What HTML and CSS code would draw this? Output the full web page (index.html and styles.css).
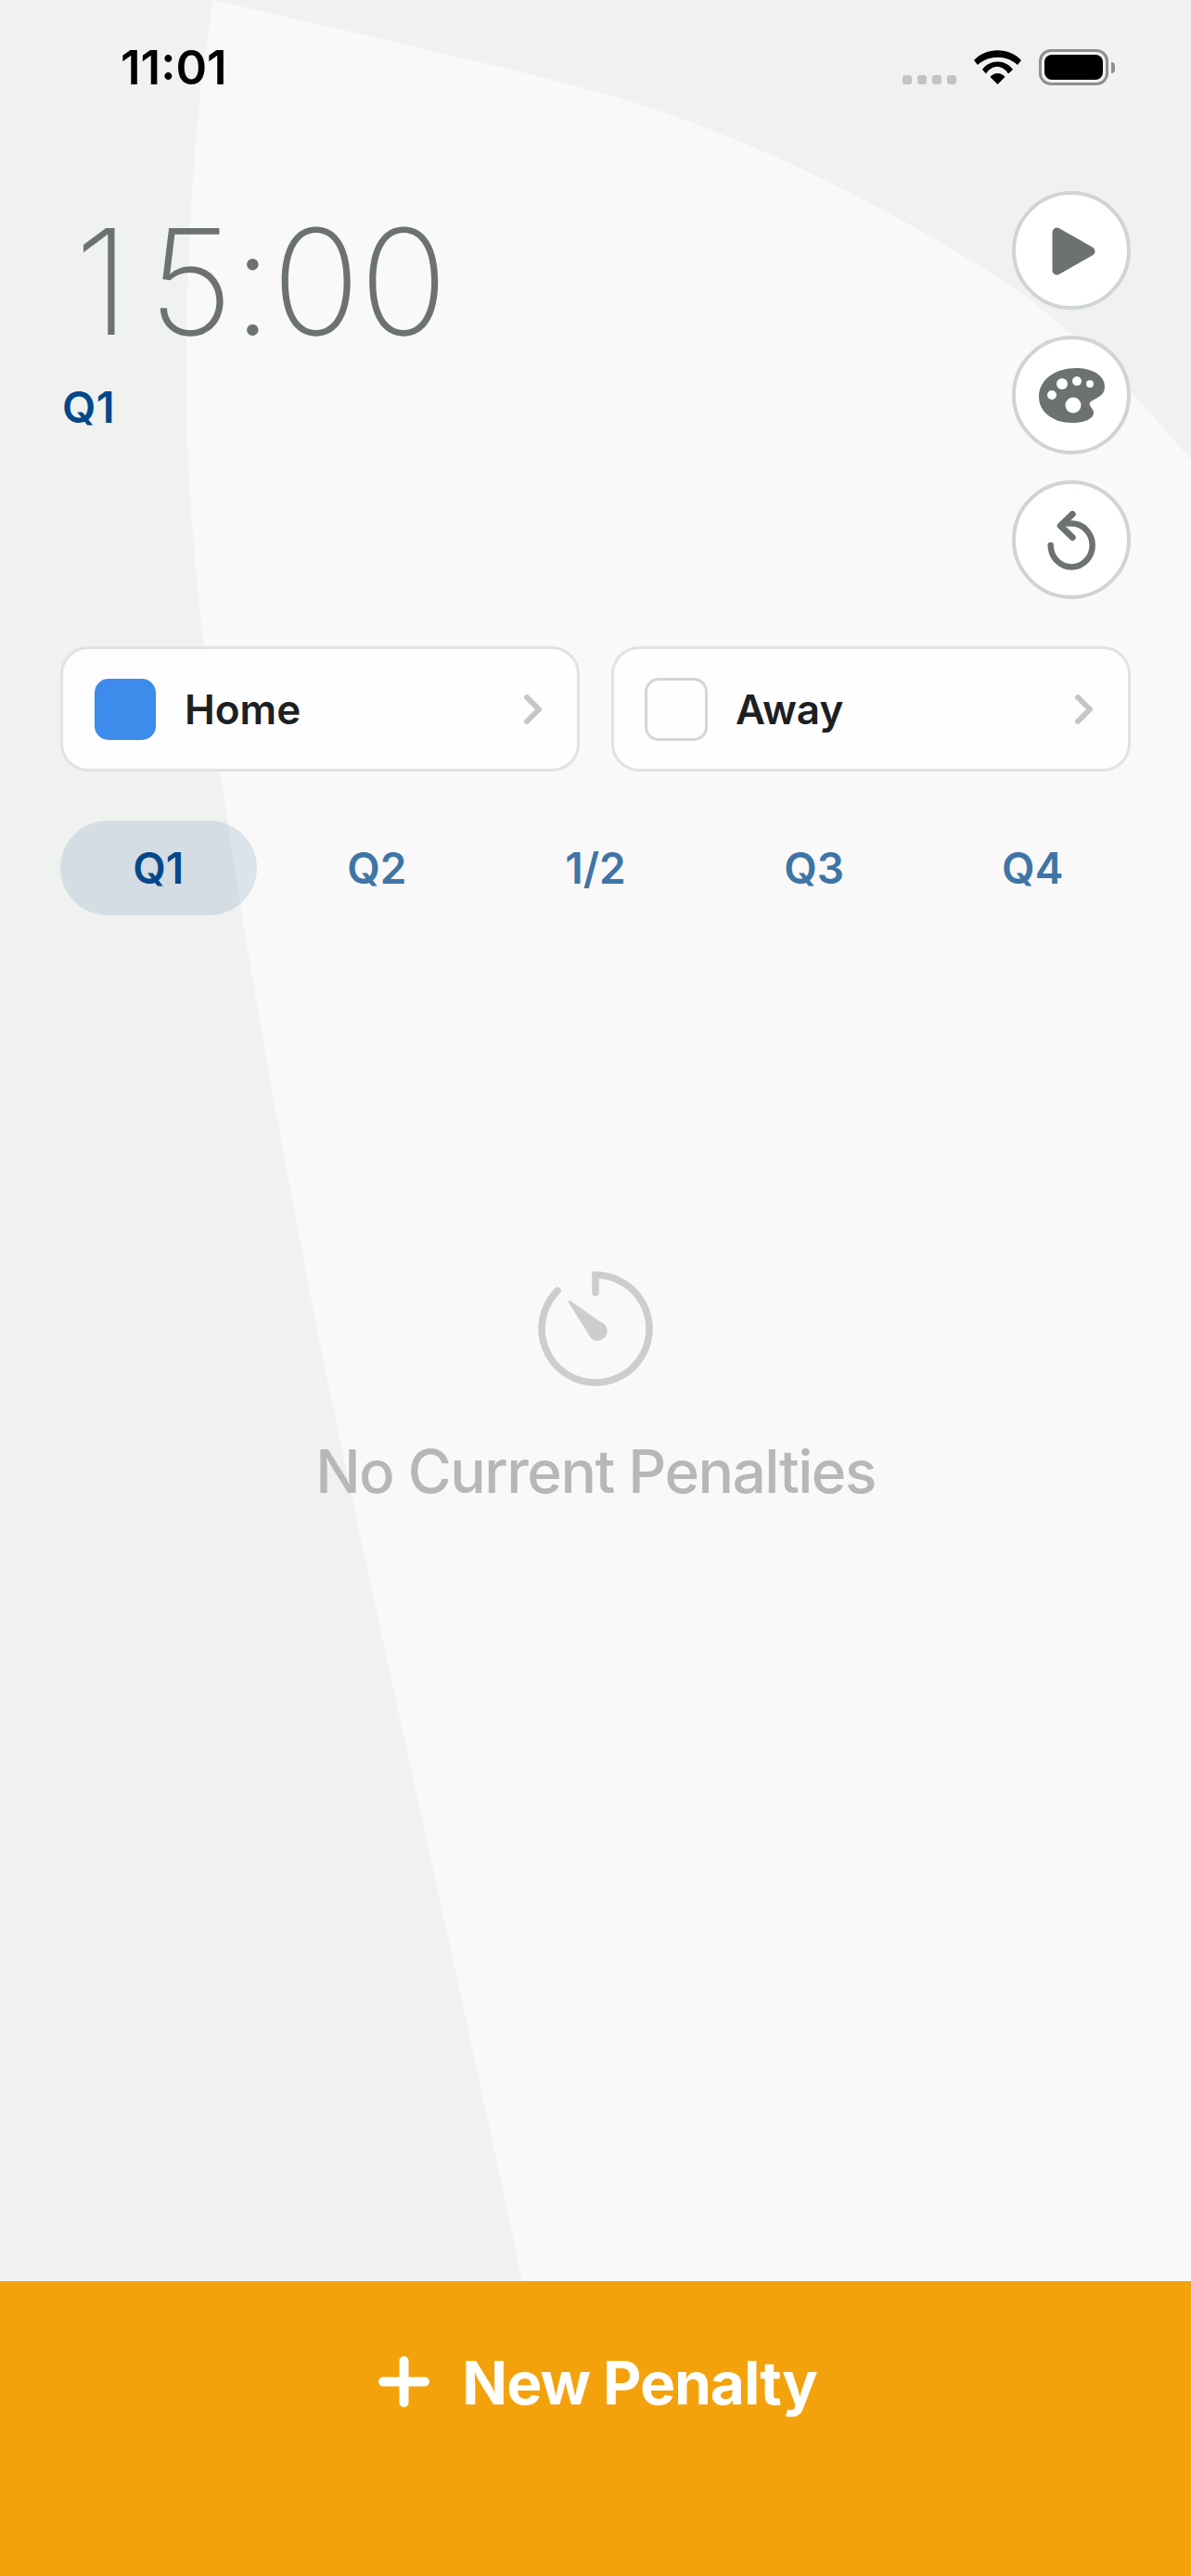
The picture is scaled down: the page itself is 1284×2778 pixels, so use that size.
FILE: index.html
```html
<!DOCTYPE html>
<html lang="en">
	<head>
		<meta charset="UTF-8" />
		<meta name="viewport" content="width=device-width, initial-scale=1.0" />
		<title>Penalty Timer</title>
		<link rel="stylesheet" href="styles.css">
	</head>
	<body>
		<div class="screen">
			<svg class="bg-shape" width="1284" height="2460" viewBox="0 0 1284 2460">
				<path d="M230 0C207 130 196 340 203 500C212 700 262 1020 324 1340C370 1590 470 2020 563 2460H1284V496C1220 420 1150 347 1077 300C960 225 800 141 640 98C505 62 370 33 230 0Z" fill="#f9f9f9" />
			</svg>
			<div class="status-bar">
				<span class="clock">11:01</span>
				<div class="status-icons">
					<div class="signal">
						<i></i><i></i><i></i><i></i>
					</div>
					<svg class="wifi" width="51" height="37" viewBox="0 0 51 37">
						<path d="M0 11C13-3.500 38-3.500 51 11L47 16C35 5 16 5 4 16Z" />
						<path d="M9 21C17 9.500 34 9.500 42 21L37 25.500C31 15.500 19 15.500 13 25.500Z" />
						<path d="M17.500 29C22 23.800 29 23.800 33.500 29L25.500 37Z" />
					</svg>
					<div class="battery">
						<div class="battery-level"></div>
					</div>
					<div class="battery-cap"></div>
				</div>
			</div>
			<div class="top-row">
				<div class="time-box">
					<div class="timer">15:00</div>
					<div class="quarter-label">Q1</div>
				</div>
				<div class="tool-list">
					<button class="tool-btn" type="button">
						<svg width="60" height="60" viewBox="0 0 60 60">
							<path d="M14.500 10.500L50.500 31L14.500 51.500Z" fill="#6c7172" stroke="#6c7172" stroke-width="10" stroke-linejoin="round" />
						</svg>
					</button>
					<button class="tool-btn" type="button">
						<svg width="71" height="59" viewBox="0 0 71 59">
							<path d="M0 31C0 12 18 0 40 0C58 0 71 8 71 20C71 30 62 32 56 36C52 39 58 43 59 47C60 54 50 59 36 59C15 59 0 47 0 31Z" fill="#6c7172" />
							<circle cx="14" cy="29" r="5" fill="#fff" />
							<circle cx="25" cy="17" r="6" fill="#fff" />
							<circle cx="41" cy="14" r="5" fill="#fff" />
							<circle cx="55" cy="17" r="4" fill="#fff" />
							<circle cx="37" cy="40" r="8.500" fill="#fff" />
						</svg>
					</button>
					<button class="tool-btn" type="button">
						<svg width="60" height="70" viewBox="-1.200 -3.500 60 70" fill="none" stroke="#6c7172" stroke-linecap="round" stroke-linejoin="round">
							<path d="M6.500 37.500A22.500 23.500 0 1 0 29 14H24" stroke-width="6.500" />
							<path d="M30 4L17 16.500L30 29" stroke-width="7" />
						</svg>
					</button>
				</div>
			</div>
			<div class="team-row">
				<div class="team-card">
					<div class="swatch swatch-home"></div>
					<span class="team-name">Home</span>
					<svg class="chevron" width="19" height="32" viewBox="0 0 19 32">
						<path d="M3 3L16 16L3 29" />
					</svg>
				</div>
				<div class="team-card">
					<div class="swatch swatch-away"></div>
					<span class="team-name">Away</span>
					<svg class="chevron" width="19" height="32" viewBox="0 0 19 32">
						<path d="M3 3L16 16L3 29" />
					</svg>
				</div>
			</div>
			<div class="period-row">
				<div class="period active">Q1</div>
				<div class="period">Q2</div>
				<div class="period">1/2</div>
				<div class="period">Q3</div>
				<div class="period">Q4</div>
			</div>
			<div class="empty-state">
				<svg width="124" height="124" viewBox="0 0 124 124">
					<path d="M62 23V4A58 58 0 1 1 21 21" fill="none" stroke="#cbcecd" stroke-width="7.500" stroke-linecap="round" />
					<path d="M32.500 33Q33.500 30.500 36 32.500L66.500 54A10.500 10.500 0 1 1 54 67Z" fill="#cbcecd" />
				</svg>
				<p class="empty-text">No Current Penalties</p>
			</div>
			<div class="footer-btn">
				<svg width="55" height="55" viewBox="0 0 55 55">
					<path d="M5 27.500H50M27.500 5V50" stroke="#fff" stroke-width="10" stroke-linecap="round" />
				</svg>
				<span class="footer-label">New Penalty</span>
			</div>
		</div>
	</body>
</html>
```

FILE: styles.css
```css
* {
	box-sizing: border-box;
}
body {
	margin: 0;
	font-family: "Inter", "Liberation Sans", sans-serif;
}
.screen {
	position: relative;
	width: 1284px;
	height: 2778px;
	background: #f0f2f0;
	display: flex;
	flex-direction: column;
	overflow: hidden;
}
.bg-shape {
	position: absolute;
	top: 0;
	left: 0;
}
.status-bar,
.top-row,
.team-row,
.period-row,
.empty-state,
.footer-btn {
	position: relative;
}
.status-bar {
	height: 206px;
	padding: 49px 82px 0 130px;
	display: flex;
	justify-content: space-between;
	align-items: flex-start;
}
.clock {
	font-size: 51px;
	line-height: 48px;
	font-weight: 600;
	color: #000;
}
.status-icons {
	display: flex;
	align-items: flex-start;
	margin-top: 4px;
}
.signal {
	display: flex;
	gap: 6px;
	margin-top: 28px;
	margin-right: 19px;
}
.signal i {
	width: 10px;
	height: 10px;
	border-radius: 3px;
	background: #c2c4c2;
}
.wifi {
	fill: #000;
	margin-top: 1px;
	margin-right: 19px;
}
.battery {
	width: 75px;
	height: 39px;
	border: 3px solid #8e8f8e;
	border-radius: 13px;
	padding: 3px;
}
.battery-level {
	height: 100%;
	background: #000;
	border-radius: 8px;
}
.battery-cap {
	width: 4px;
	height: 12px;
	margin: 14px 0 0 3px;
	background: #8e8f8e;
	border-radius: 0 4px 4px 0;
}
.top-row {
	display: flex;
	justify-content: space-between;
	align-items: flex-start;
	padding: 0 65px 0 66px;
}
.time-box {
	display: flex;
	flex-direction: column;
}
.timer {
	font-size: 158px;
	line-height: 160px;
	font-weight: 220;
	letter-spacing: -1px;
	color: #6c7172;
	margin-top: 18px;
	margin-left: 14px;
}
.timer::first-letter {
	letter-spacing: 20px;
}
.quarter-label {
	font-size: 47px;
	line-height: 54px;
	font-weight: 600;
	letter-spacing: 0.5px;
	color: #03488a;
	margin-top: 28px;
	margin-left: 1px;
}
.tool-list {
	display: flex;
	flex-direction: column;
	gap: 28px;
}
.tool-btn {
	width: 128px;
	height: 128px;
	padding: 0;
	border: 4px solid #d0d4d3;
	border-radius: 50%;
	background: #fff;
	display: flex;
	align-items: center;
	justify-content: center;
}
.team-row {
	display: flex;
	gap: 34px;
	padding: 0 65px;
	margin-top: 51px;
}
.team-card {
	flex: 1;
	height: 135px;
	display: flex;
	align-items: center;
	padding: 0 38px 0 34px;
	background: #ffffffd9;
	border: 3px solid #e0e3e2;
	border-radius: 30px;
}
.swatch {
	width: 66px;
	height: 66px;
	border-radius: 15px;
	margin-right: 31px;
}
.swatch-home {
	background: #3d8bea;
}
.swatch-away {
	width: 68px;
	height: 68px;
	margin-left: -1px;
	margin-right: 30px;
	border: 3px solid #d2d6d5;
}
.team-name {
	flex: 1;
	font-size: 44px;
	font-weight: 600;
	color: #1c2022;
}
.chevron {
	fill: none;
	stroke: #c5c7c6;
	stroke-width: 6;
	stroke-linecap: round;
	stroke-linejoin: round;
}
.period-row {
	display: grid;
	grid-template-columns: repeat(5, 1fr);
	gap: 24px;
	padding: 0 65px;
	margin-top: 53px;
}
.period {
	height: 102px;
	display: flex;
	align-items: center;
	justify-content: center;
	font-size: 46px;
	font-weight: 600;
	color: #3f74a6;
	border-radius: 51px;
}
.period.active {
	color: #03488a;
	background: #03488a1e;
}
.empty-state {
	flex: 1;
	display: flex;
	flex-direction: column;
	align-items: center;
	padding-top: 384px;
}
.empty-text {
	margin: 53px 0 0;
	font-size: 64px;
	line-height: 78px;
	font-weight: 500;
	letter-spacing: -1.5px;
	color: #b6b8b7;
}
.footer-btn {
	height: 318px;
	padding: 81px 0 0 5px;
	background: #f4a20c;
	display: flex;
	justify-content: center;
	align-items: flex-start;
	gap: 35px;
}
.footer-label {
	font-size: 64px;
	line-height: 70px;
	font-weight: 700;
	letter-spacing: -1px;
	color: #fff;
	margin-top: -6px;
}
```
